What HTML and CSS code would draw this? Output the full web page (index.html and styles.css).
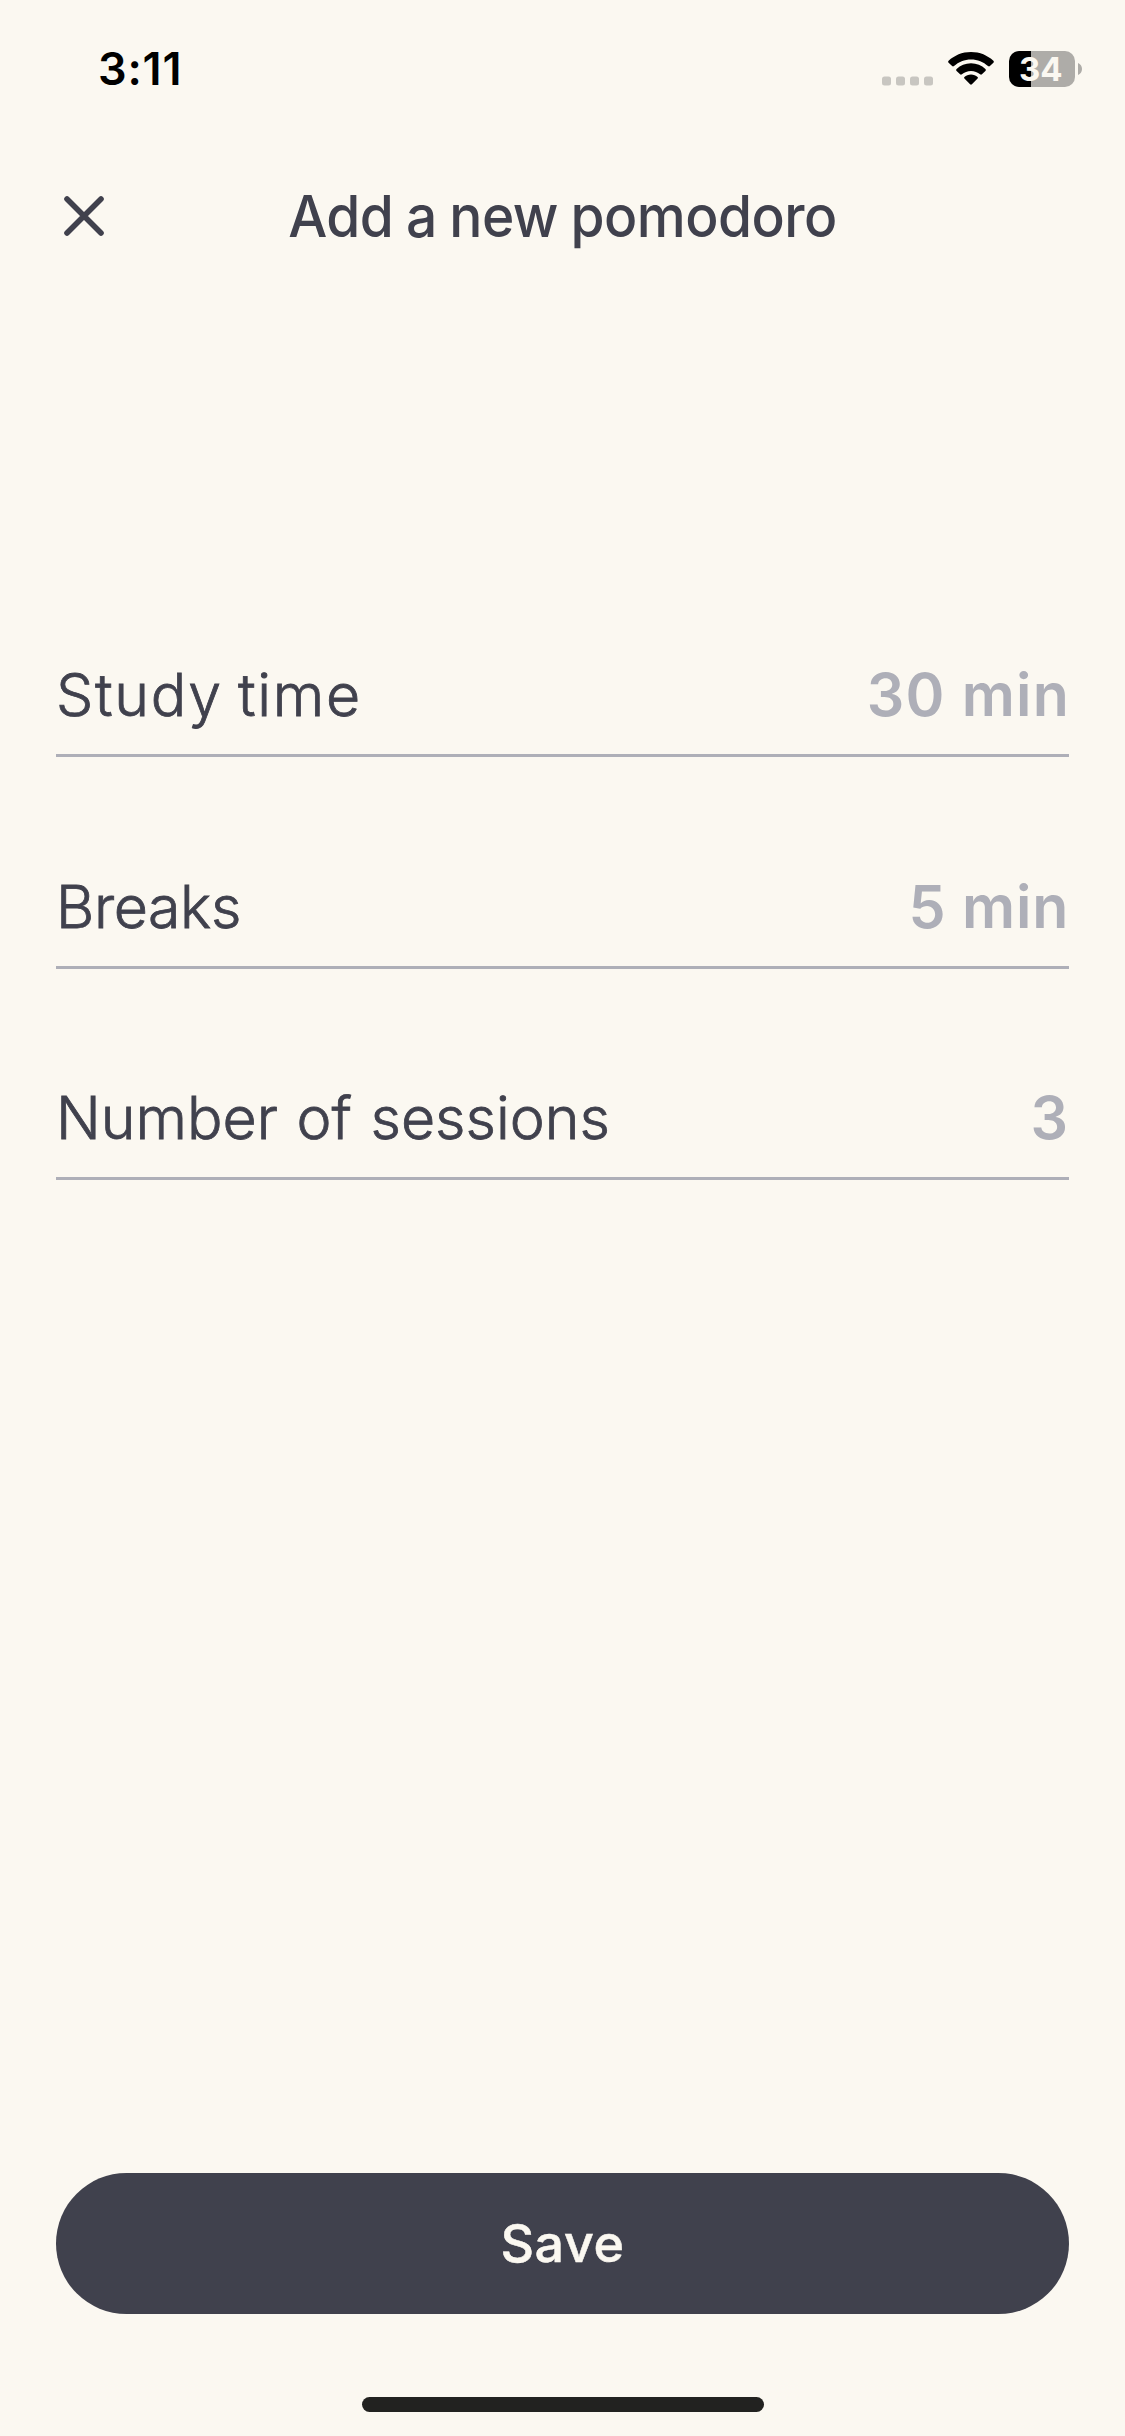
FILE: index.html
```html
<!DOCTYPE html>
<html lang="en">
<head>
<meta charset="utf-8">
<title>Add a new pomodoro</title>
<link rel="stylesheet" href="styles.css">
</head>
<body>
<div class="screen">
  <div class="status-bar">
    <span class="clock">3:11</span>
    <div class="indicators">
      <svg class="signal" width="52" height="10" viewBox="0 0 52 10">
        <rect x="0" y="0.5" width="9" height="9" rx="2.5"/>
        <rect x="14" y="0.5" width="9" height="9" rx="2.5"/>
        <rect x="28" y="0.5" width="9" height="9" rx="2.5"/>
        <rect x="42" y="0.5" width="9" height="9" rx="2.5"/>
      </svg>
      <svg class="wifi" width="46" height="34" viewBox="0 0 46 34">
        <path d="M23 0C31.8 0 39.7 3.4 45.4 8.8C46 9.4 46 10.1 45.4 10.7L41.9 14.1C41.3 14.7 40.6 14.6 40 14.1C35.5 10 29.5 7.5 23 7.5S10.5 10 6 14.1C5.4 14.6 4.7 14.7 4.1 14.1L0.6 10.7C0 10.1 0 9.4 0.6 8.8C6.3 3.4 14.2 0 23 0Z"/>
        <path d="M23 11.3C28.6 11.3 33.7 13.5 37.4 17C38 17.6 38 18.3 37.4 18.9L33.9 22.3C33.3 22.9 32.7 22.8 32.1 22.3C29.7 20.2 26.5 18.9 23 18.9S16.3 20.2 13.9 22.3C13.3 22.8 12.7 22.9 12.1 22.3L8.6 18.9C8 18.3 8 17.6 8.6 17C12.3 13.5 17.4 11.3 23 11.3Z"/>
        <path d="M23 22.6C25.6 22.6 27.9 23.5 29.6 25C30.1 25.5 30.1 26.1 29.6 26.6L23.9 32.3C23.3 32.9 22.7 32.9 22.1 32.3L16.4 26.6C15.9 26.1 15.9 25.5 16.4 25C18.1 23.5 20.4 22.6 23 22.6Z"/>
      </svg>
      <div class="battery">
        <span class="battery-body">34</span>
        <svg width="4" height="12" viewBox="0 0 4 12"><path d="M0 0C2.4 1 4 3.3 4 6S2.4 11 0 12Z"/></svg>
      </div>
    </div>
  </div>

  <header class="nav">
    <button class="close" aria-label="Close">
      <svg width="40" height="40" viewBox="0 0 40 40"><path d="M3 3L37 37M37 3L3 37"/></svg>
    </button>
    <h1 class="title">Add a new pomodoro</h1>
  </header>

  <main class="settings">
    <div class="row">
      <span class="label label-study">Study time</span>
      <span class="value value-study">30 min</span>
    </div>
    <div class="row row-breaks">
      <span class="label label-breaks">Breaks</span>
      <span class="value value-breaks">5 min</span>
    </div>
    <div class="row">
      <span class="label label-sessions">Number of sessions</span>
      <span class="value value-sessions">3</span>
    </div>
  </main>

  <footer class="footer">
    <button class="save">Save</button>
    <div class="home-indicator"></div>
  </footer>
</div>
</body>
</html>
```
FILE: styles.css
```css
* { box-sizing: border-box; }

body {
  margin: 0;
  background: #fbf8f1;
  color: #40414d;
  font-family: Inter, "Liberation Sans", sans-serif;
}

button {
  border: 0;
  padding: 0;
  background: none;
  color: inherit;
  font: inherit;
}

svg { display: block; }

.screen {
  display: flex;
  flex-direction: column;
  width: 1125px;
  height: 2436px;
  overflow: hidden;
}

.status-bar {
  display: flex;
  justify-content: space-between;
  height: 166px;
  padding: 42px 43px 0 98px;
  color: #000;
}

.clock {
  font-size: 45px;
  font-weight: 600;
  line-height: 54px;
  letter-spacing: 0.8px;
}

.indicators {
  display: flex;
  align-items: flex-start;
  padding-top: 9px;
}

.signal {
  margin: 25px 14px 0 0;
  fill: #c8c6c1;
}

.wifi {
  margin: 1px 15px 0 0;
}

.battery {
  display: flex;
  align-items: center;
  gap: 3px;
}

.battery-body {
  width: 66px;
  height: 36px;
  padding-left: 10px;
  border-radius: 10px;
  background: linear-gradient(to right, #000 22px, #aeaca8 22px);
  color: #fbf8f1;
  font-size: 33px;
  font-weight: 700;
  line-height: 36px;
}

.battery svg { fill: #aeaca8; }

.nav {
  display: grid;
  grid-template-columns: 64px 1fr 64px;
  align-items: center;
  height: 100px;
  padding: 0 32px;
}

.close { padding-left: 32px; }

.close path {
  fill: none;
  stroke: #40414d;
  stroke-width: 5.6;
  stroke-linecap: round;
}

.title {
  margin: 0;
  font-size: 58px;
  font-weight: 500;
  line-height: 100px;
  letter-spacing: -0.55px;
  word-spacing: -1.7px;
  text-align: center;
  white-space: nowrap;
  transform: scaleX(0.95);
}

.settings {
  display: flex;
  flex: 1;
  flex-direction: column;
  gap: 113px;
  padding: 392.5px 56px 0;
}

.row {
  display: flex;
  justify-content: space-between;
  height: 98.5px;
  border-bottom: 3px solid #aeafb8;
  font-size: 59px;
  line-height: 72px;
}

.row-breaks { line-height: 73px; }

.label {
  font-weight: 300;
  -webkit-text-stroke: 0.8px #40414d;
}

.label-study {
  letter-spacing: 1.7px;
  word-spacing: -3px;
}

.label-breaks { letter-spacing: -0.4px; }

.label-sessions {
  letter-spacing: 0;
  word-spacing: 2px;
}

.value {
  color: #aeafb8;
  font-weight: 600;
}

.value-study {
  margin-right: -1px;
  letter-spacing: 1.2px;
}

.value-breaks { letter-spacing: 0.75px; }
.value-sessions { margin-right: 1px; }

.footer {
  display: flex;
  flex-direction: column;
  align-items: center;
  height: 263px;
  padding: 0 56px;
}

.save {
  width: 100%;
  height: 141px;
  border-radius: 71px;
  background: #40414d;
  color: #fbf8f1;
  font-size: 52px;
  font-weight: 500;
  line-height: 141px;
  letter-spacing: 0.6px;
  -webkit-text-stroke: 0.5px #fbf8f1;
}

.home-indicator {
  width: 402px;
  height: 15px;
  margin-top: 83px;
  border-radius: 8px;
  background: #222220;
}
```
